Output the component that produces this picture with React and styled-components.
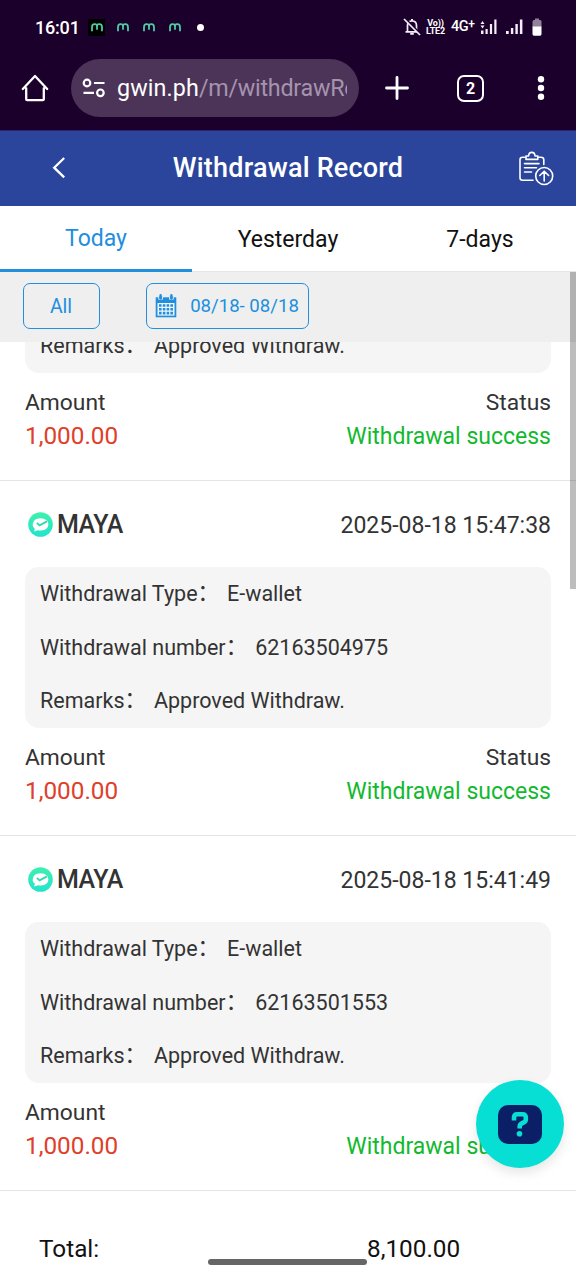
import React from 'react';
import styled, { createGlobalStyle } from 'styled-components';

const GlobalStyle = createGlobalStyle`
    * {
        box-sizing: border-box;
    }
    body {
        margin: 0;
        background: #fff;
        font-family: Roboto, "Noto Sans CJK SC", sans-serif;
    }
`

// the first record is scrolled: only its last detail row is left on screen
const records = [
    { id: 1, scrolled: true, amount: '1,000.00' },
    { id: 2, time: '2025-08-18 15:47:38', number: '62163504975', amount: '1,000.00' },
    { id: 3, time: '2025-08-18 15:41:49', number: '62163501553', amount: '1,000.00' },
];

const tabs = ['Today', 'Yesterday', '7-days'];

function MayaNotice({ dark }) {
    return (
        <NoticeBox $dark={dark}>
            <svg width="12" height="9" viewBox="0 0 12 9" fill="none" stroke="#4fc9a4" strokeWidth="1.8">
                <path d="M1 8.2V4.2Q1 1.2 3.5 1.2H4Q6 1.2 6 3.4V6.8V3.4Q6 1.2 8 1.2H8.5Q11 1.2 11 4.2V8.2" />
            </svg>
        </NoticeBox>
    );
}

function StatusBar() {
    return (
        <StatusRow>
            <Clock>16:01</Clock>
            <MayaNotice dark />
            <MayaNotice />
            <MayaNotice />
            <MayaNotice />
            <MoreDot />
            <StatusRight>
                <svg width="18" height="18" viewBox="0 0 18 18" fill="none" stroke="#f5eef8" strokeWidth="1.7">
                    <path d="M4.5 13.5V7.5Q4.5 3 9 3Q13.5 3 13.5 7.5V13.5M2.5 13.8H15.5" />
                    <path d="M9 1V3M7.2 15.8H10.8" strokeWidth="2" />
                    <path d="M1.8 .2L17.8 16.2" stroke="#1c002c" strokeWidth="2" />
                    <path d="M1 1L17 17" />
                </svg>
                <Volte>
                    <span>Vo))</span>
                    <span>LTE2</span>
                </Volte>
                <Network>4G<sup>+</sup></Network>
                <svg width="18" height="18" viewBox="0 0 18 18" fill="#f5eef8">
                    <path d="M2.5 3L4.5 6H.5ZM2.5 10.5L.5 7.5H4.5ZM1 12.5H3.5V16H1ZM5.5 11H7.7V16H5.5ZM9.9 6H12.1V16H9.9ZM14.3 1.5H16.5V16H14.3Z" />
                </svg>
                <svg width="18" height="18" viewBox="0 0 18 18" fill="#f5eef8">
                    <path d="M0 13H2.7V16H0ZM4.9 10H7.3V16H4.9ZM9.4 6H11.8V16H9.4ZM13.9 1.5H16.4V16H13.9Z" />
                </svg>
                <svg width="10" height="18" viewBox="0 0 10 18">
                    <path d="M3 .5H7V2H8Q9.5 2 9.5 3.5V9H.5V3.5Q.5 2 2 2H3Z" fill="#938099" />
                    <path d="M.5 8.5H9.5V16Q9.5 17.7 8 17.7H2Q.5 17.7 .5 16Z" fill="#fff" />
                </svg>
            </StatusRight>
        </StatusRow>
    );
}

function BrowserBar() {
    return (
        <BrowserRow>
            <svg width="28" height="28" viewBox="0 0 28 28" fill="none" stroke="#fff" strokeWidth="2.3" strokeLinejoin="round" strokeLinecap="round">
                <path d="M5.2 14V25Q5.2 26 6.2 26H21.8Q22.8 26 22.8 25V14M1.8 14.8L14 1.8L26.2 14.8" transform="translate(0 .2)" />
            </svg>
            <UrlPill>
                <svg width="24" height="20" viewBox="0 0 24 20" fill="none" stroke="#fff" strokeWidth="2.2">
                    <circle cx="5" cy="5" r="3.3" />
                    <circle cx="18.4" cy="14.8" r="3.3" />
                    <path d="M12 5H22.5M1.5 14.8H12" />
                </svg>
                <UrlText><b>gwin.ph</b>/m/withdrawRe</UrlText>
            </UrlPill>
            <BarActions>
                <svg width="24" height="24" viewBox="0 0 24 24" stroke="#fff" strokeWidth="2.8" strokeLinecap="round">
                    <path d="M12 1.5V22.5M1.5 12H22.5" />
                </svg>
                <TabCount>2</TabCount>
                <svg width="8" height="26" viewBox="0 0 8 26" fill="#fff">
                    <circle cx="4" cy="4.2" r="3.2" />
                    <circle cx="4" cy="13" r="3.2" />
                    <circle cx="4" cy="21.8" r="3.2" />
                </svg>
            </BarActions>
        </BrowserRow>
    );
}

function MayaLogo() {
    return (
        <svg width="25" height="25" viewBox="0 0 25 25">
            <defs>
                <linearGradient id="maya" x1="0" y1="0" x2="0" y2="1">
                    <stop offset="0" stopColor="#3ff0ae" />
                    <stop offset="1" stopColor="#22e3cd" />
                </linearGradient>
            </defs>
            <circle cx="12.5" cy="12.5" r="12.3" fill="url(#maya)" />
            <path d="M4.6 13Q4.8 6.5 12.5 6.2Q20.2 6.4 20.4 12.5Q20.2 18.2 12.8 18.6Q11.4 18.6 10 18.3L6.2 19.6L6.8 16.8Q4.7 15.2 4.6 13Z" fill="#fff" />
            <path d="M8.8 10.8L11.6 13.3L19 9.4" fill="none" stroke="#30d9b1" strokeWidth="1.8" />
        </svg>
    );
}

function DetailLine({ name, children }) {
    return (
        <DetailRow>{name}<Colon>：</Colon>{children}</DetailRow>
    );
}

function Record({ time, number, amount, scrolled }) {
    return (
        <RecordItem>
            {scrolled ? null :
                <RecordHead>
                    <MayaLogo />
                    <Bank>MAYA</Bank>
                    <Time>{time}</Time>
                </RecordHead>
            }
            <Detail>
                {scrolled ? null :
                    <>
                        <DetailLine name="Withdrawal Type">E-wallet</DetailLine>
                        <DetailLine name="Withdrawal number">{number}</DetailLine>
                    </>
                }
                <DetailLine name="Remarks">Approved Withdraw.</DetailLine>
            </Detail>
            <Summary>
                <Label>Amount</Label>
                <Label>Status</Label>
                <Money>{amount}</Money>
                <Success>Withdrawal success</Success>
            </Summary>
        </RecordItem>
    );
}

function App() {
    return (
        <Phone>
            <GlobalStyle />
            <Chrome>
                <StatusBar />
                <BrowserBar />
            </Chrome>

            <Header>
                <svg width="14" height="22" viewBox="0 0 14 22" fill="none" stroke="#fff" strokeWidth="2.3">
                    <path d="M12.2 1L2.2 10.7L12.2 20.4" />
                </svg>
                <Title>Withdrawal Record</Title>
                <svg width="38" height="38" viewBox="-2 -2 38 38" fill="none" stroke="#fff" strokeWidth="1.6" strokeLinecap="round" strokeLinejoin="round">
                    <path d="M7 6.2H4.5Q2 6.2 2 8.7V26.8Q2 29.3 4.5 29.3H15M20.5 6.2H23Q25.8 6.2 25.8 8.7V13.5" />
                    <path d="M8 8.4V5H10.6Q10.8 1.4 13.8 1.4Q16.8 1.4 17 5H19.8V8.4Z" />
                    <path d="M6.5 12.6H21M6.5 16.8H18.5M6.5 21H13.5" />
                    <circle cx="26.2" cy="25" r="8.5" />
                    <path d="M26.2 30V20.5M21.8 24.5L26.2 20.2L30.6 24.5" />
                </svg>
            </Header>

            <Tabs>
                {tabs.map((t, idx) => {
                    return <Tab key={t} $active={idx === 0}>{t}</Tab>
                })}
            </Tabs>

            <Filters>
                <FilterButton $width={77}>All</FilterButton>
                <FilterButton $width={163}>
                    <svg width="22" height="24" viewBox="0 0 22 24">
                        <path d="M.7 3.3H21.3V23.3H.7Z" fill="#218fdd" />
                        <path d="M2.5 9H19.5V21.6H2.5Z" fill="#f2f7fb" />
                        <path d="M3.8 2.5V5.3H7.4V2.5M14.6 2.5V5.3H18.2V2.5" fill="#218fdd" stroke="#efefef" strokeWidth="1" />
                        <path d="M5.6 1.3V4.6M16.4 1.3V4.6" stroke="#218fdd" strokeWidth="2.4" strokeLinecap="round" />
                        <path d="M4 11.5H18M4 15.3H18M4 19.1H18" stroke="#218fdd" strokeWidth="2.6" strokeDasharray="2.6 1.2" />
                    </svg>
                    <DateText>08/18- 08/18</DateText>
                </FilterButton>
            </Filters>

            <List>
                {records.map((r) => {
                    return <Record key={r.id} {...r} />
                })}
            </List>

            <Total>
                <TotalCell>Total:</TotalCell>
                <TotalCell>8,100.00</TotalCell>
            </Total>

            <Scrollbar />
            <HelpButton>
                <svg width="44" height="39" viewBox="0 0 44 39">
                    <rect width="44" height="39" rx="10" fill="#0b1f67" />
                    <path d="M16 15.5V12.5Q16 9.2 19.2 9.2H24.5Q27.8 9.2 27.8 12.5V14.2Q27.8 16.4 25.8 17.4L23.8 18.4Q21.7 19.5 21.7 21.5V23.6" fill="none" stroke="#07dfd5" strokeWidth="4.6" />
                    <circle cx="21.5" cy="28.7" r="2.8" fill="#07dfd5" />
                </svg>
            </HelpButton>
            <GestureBar />
        </Phone>
    );
}

const Phone = styled.div`
    position: relative;
    display: flex;
    flex-direction: column;
    width: 576px;
    height: 1280px;
    overflow: hidden;
    background: #fff;
    color: #333;
`
const Chrome = styled.div`
    height: 131px;
    flex: none;
    background: #1c002c;
    border-bottom: 1px solid #35236a;
    color: #fff;
`
const StatusRow = styled.div`
    display: flex;
    align-items: center;
    height: 54px;
    padding: 0 34px 0 35px;
`
const Clock = styled.div`
    width: 53px;
    font-size: 18px;
    font-weight: 500;
    letter-spacing: -0.2px;
    white-space: nowrap;
`
const NoticeBox = styled.div`
    display: flex;
    align-items: center;
    justify-content: center;
    width: 17px;
    height: 17px;
    margin-right: 9px;
    background: ${props => props.$dark ? '#000' : 'transparent'};
`
const MoreDot = styled.div`
    width: 7px;
    height: 7px;
    margin-left: 5px;
    border-radius: 50%;
    background: #fff;
`
const StatusRight = styled.div`
    display: flex;
    align-items: center;
    margin-left: auto;
    gap: 8px;
    svg:first-child {
        margin-right: -4px;
    }
`
const Volte = styled.div`
    display: flex;
    flex-direction: column;
    align-items: center;
    width: 21px;
    font-size: 9px;
    font-weight: 700;
    line-height: 8px;
    letter-spacing: -0.2px;
`
const Network = styled.div`
    width: 24px;
    margin-left: -3px;
    margin-right: -3px;
    font-size: 14.5px;
    font-weight: 500;
    line-height: 18px;
    letter-spacing: -0.5px;
    white-space: nowrap;
    sup {
        font-size: 12px;
        line-height: 0;
        vertical-align: 3px;
    }
`
const BrowserRow = styled.div`
    display: flex;
    align-items: center;
    gap: 22px;
    height: 68px;
    padding: 0 31px 0 21px;
`
const UrlPill = styled.div`
    display: flex;
    align-items: center;
    gap: 11px;
    width: 288px;
    height: 58px;
    padding: 0 12px 0 11px;
    border-radius: 29px;
    background: #4c3459;
`
const UrlText = styled.div`
    flex: 1;
    overflow: hidden;
    color: #a594ad;
    font-size: 23.3px;
    letter-spacing: -0.25px;
    line-height: 32px;
    white-space: nowrap;
    b {
        color: #fff;
        font-weight: 400;
        letter-spacing: 0.1px;
    }
`
const BarActions = styled.div`
    display: flex;
    align-items: center;
    justify-content: space-between;
    flex: 1;
    margin-left: 4px;
`
const TabCount = styled.div`
    display: flex;
    align-items: center;
    justify-content: center;
    width: 27px;
    height: 27px;
    margin-right: 5px;
    border: 2.6px solid #fff;
    border-radius: 7px;
    font-size: 16px;
    font-weight: 700;
`
const Header = styled.header`
    display: grid;
    grid-template-columns: 60px 1fr 60px;
    align-items: center;
    flex: none;
    height: 75px;
    padding: 0 0 2px;
    background: #2a459b;
    color: #fff;
    svg:first-child {
        margin-left: 52px;
    }
`
const Title = styled.h1`
    margin: 0;
    font-size: 27px;
    font-weight: 500;
    letter-spacing: 0.2px;
    text-align: center;
`
const Tabs = styled.nav`
    display: flex;
    flex: none;
    height: 66px;
`
const Tab = styled.div`
    display: flex;
    align-items: center;
    justify-content: center;
    flex: 1;
    padding-top: ${props => props.$active ? 2 : 1}px;
    border-bottom: ${props => props.$active ? '3px solid #218fdd' : '1px solid #e6e6e6'};
    color: ${props => props.$active ? '#218fdd' : '#111'};
    font-size: 23px;
`
const Filters = styled.div`
    display: flex;
    flex: none;
    gap: 46px;
    height: 70px;
    padding: 11px 23px;
    background: #efefef;
`
const FilterButton = styled.div`
    display: flex;
    align-items: center;
    justify-content: center;
    gap: 13px;
    width: ${props => props.$width}px;
    height: 46px;
    padding-right: 1px;
    border: 1px solid #218fdd;
    border-radius: 7px;
    color: #218fdd;
    font-size: 19.5px;
`
const DateText = styled.span`
    font-size: 18.6px;
    white-space: nowrap;
`
const List = styled.div`
    display: flex;
    flex-direction: column;
    justify-content: flex-end;
    flex: none;
    height: 849px;
    overflow: hidden;
`
const RecordItem = styled.div`
    flex: none;
    padding: 0 25px;
    border-bottom: 1px solid #e4e4e4;
`
const RecordHead = styled.div`
    display: flex;
    align-items: center;
    height: 86px;
    padding: 1px 0 0 3px;
`
const Bank = styled.div`
    margin-left: 4px;
    font-size: 25px;
    font-weight: 500;
    letter-spacing: -0.5px;
`
const Time = styled.div`
    margin-left: auto;
    padding-top: 2px;
    font-size: 23px;
`
const Detail = styled.div`
    padding: 0 15px;
    border-radius: 14px;
    background: #f5f5f5;
`
const DetailRow = styled.div`
    height: 53.66px;
    line-height: 53px;
    font-size: 21.5px;
    white-space: nowrap;
`
const Colon = styled.span`
    margin-right: 8px;
    line-height: 0;
    vertical-align: 1px;
`
const Summary = styled.div`
    display: grid;
    grid-template-columns: auto auto;
    grid-auto-rows: 34px;
    align-items: center;
    justify-content: space-between;
    height: 107px;
    padding-top: 12px;
    > :nth-child(even) {
        text-align: right;
    }
`
const Label = styled.div`
    padding-top: 1px;
    font-size: 22.8px;
    line-height: 26px;
`
const Money = styled.div`
    color: #e0402a;
    font-size: 24.3px;
    line-height: 28px;
    padding-bottom: 1px;
`
const Success = styled.div`
    color: #12b92f;
    font-size: 23px;
`
const Total = styled.div`
    display: grid;
    grid-template-columns: 328px 1fr;
    align-items: center;
    height: 89px;
    padding: 25px 39px 0;
    color: #111;
`
const TotalCell = styled.div`
    font-size: 24.3px;
`
const Scrollbar = styled.div`
    position: absolute;
    top: 272px;
    right: 0;
    width: 6px;
    height: 317px;
    background: rgba(0, 0, 0, 0.26);
`
const HelpButton = styled.div`
    position: absolute;
    left: 476px;
    top: 1080px;
    display: flex;
    align-items: center;
    justify-content: center;
    width: 88px;
    height: 88px;
    border-radius: 50%;
    background: #07dfd5;
    box-shadow: 0 5px 12px rgba(0, 0, 0, 0.1);
`
const GestureBar = styled.div`
    position: absolute;
    left: 208px;
    top: 1259px;
    width: 159px;
    height: 6px;
    border-radius: 3px;
    background: #666;
`

export default App;
